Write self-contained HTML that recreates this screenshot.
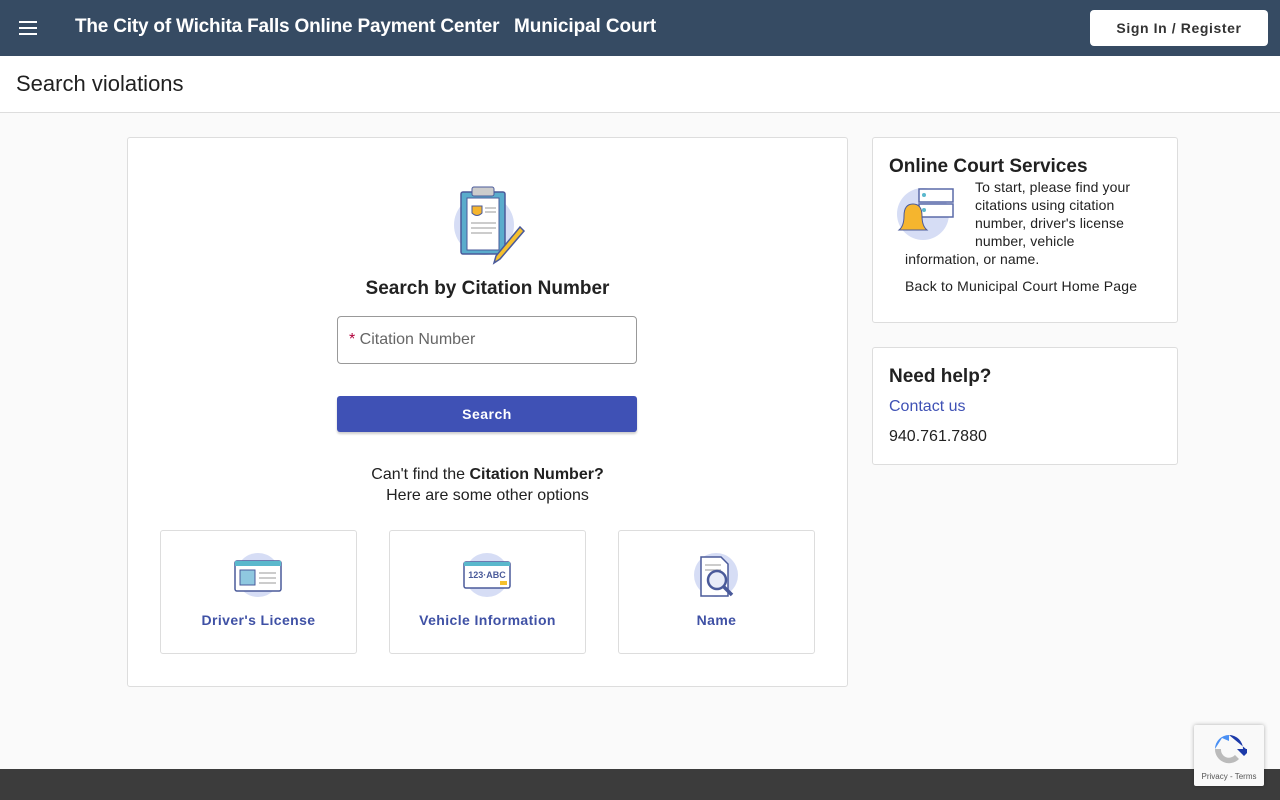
<!DOCTYPE html>
<html><head><style>
*{box-sizing:border-box;margin:0;padding:0}
body{width:1280px;height:800px;overflow:hidden;background:#fafafa;font-family:"Liberation Sans",sans-serif;color:#212121;position:relative}
.top{position:absolute;left:0;top:0;width:1280px;height:56px;background:#364b63;box-shadow:0 2px 4px rgba(0,0,0,.3)}
.top .t{position:absolute;left:75px;top:16px;color:#fff;font-size:19px;font-weight:bold;letter-spacing:-.2px}
.top .m{position:absolute;left:514px;top:16px;color:#fff;font-size:19px;font-weight:bold;letter-spacing:-.1px}
.sign{position:absolute;left:1090px;top:10px;width:178px;height:36px;background:#fff;border-radius:4px;font-size:14px;font-weight:bold;letter-spacing:.6px;text-align:center;line-height:36px;color:#333}
.sub{position:absolute;top:56px;left:0;width:1280px;height:57px;background:#fff;border-bottom:1px solid #ddd}
.sub div{position:absolute;left:16px;top:15px;font-size:22px}
.card{position:absolute;background:#fff;border:1px solid #ddd;border-radius:3px}
.opt{position:absolute;top:530px;width:197px;height:124px;border:1px solid #ddd;border-radius:3px;background:#fff}
.opt div{position:absolute;top:81px;width:100%;text-align:center;color:#3f51a5;font-weight:bold;font-size:14px;letter-spacing:.4px}
.opt svg{position:absolute;left:72px;top:22px}
.foot{position:absolute;left:0;top:769px;width:1280px;height:31px;background:#3c3c3c}
</style></head><body>
<div class="top">
<svg style="position:absolute;left:18px;top:18px" width="20" height="20"><rect x="1" y="3" width="18" height="2" fill="#fff"/><rect x="1" y="9" width="18" height="2" fill="#fff"/><rect x="1" y="15" width="18" height="2" fill="#fff"/></svg>
<div class="t">The City of Wichita Falls Online Payment Center</div>
<div class="m">Municipal Court</div>
<div class="sign">Sign In / Register</div>
</div>
<div class="sub"><div>Search violations</div></div>

<div class="card" style="left:127px;top:137px;width:721px;height:550px">
<svg style="position:absolute;left:320px;top:43px" width="80" height="85">
<circle cx="36" cy="44" r="30" fill="#d6ddf5"/>
<rect x="13" y="11" width="44" height="62" rx="2" fill="#5aaccc" stroke="#4a5a9a" stroke-width="1.5"/>
<rect x="19" y="17" width="32" height="52" fill="#fff" stroke="#4a5a9a"/>
<rect x="24" y="6" width="22" height="9" rx="2" fill="#ccc" stroke="#4a5a9a"/>
<path d="M24 25 h10 v7 q-5 5 -10 0 z" fill="#f5b52e" stroke="#4a5a9a"/>
<g stroke="#bbb" stroke-width="1.5"><line x1="37" y1="27" x2="48" y2="27"/><line x1="37" y1="31" x2="48" y2="31"/><line x1="23" y1="42" x2="48" y2="42"/><line x1="23" y1="47" x2="48" y2="47"/><line x1="23" y1="52" x2="44" y2="52"/></g>
<path d="M72 46 L76 50 L52 78 L46 82 L48 75 Z" fill="#f5c02e" stroke="#4a5a9a" stroke-width="1.5"/>
</svg>
<div style="position:absolute;top:140px;width:100%;text-align:center;font-size:19px;font-weight:bold;color:#222">Search by Citation Number</div>
<div style="position:absolute;left:209px;top:178px;width:300px;height:48px;border:1px solid #999;border-radius:4px;font-size:16px;color:#666;padding:14px 11px"><span style="color:#b0003a">*</span> Citation Number</div>
<div style="position:absolute;left:209px;top:258px;width:300px;height:36px;background:#3f51b5;border-radius:3px;color:#fff;font-weight:bold;font-size:14px;text-align:center;line-height:36px;letter-spacing:.5px;box-shadow:0 2px 2px rgba(0,0,0,.2)">Search</div>
<div style="position:absolute;top:326px;width:100%;text-align:center;font-size:16px;line-height:21px">Can't find the <b>Citation Number?</b><br>Here are some other options</div>
</div>
<div class="opt" style="left:160px"><svg width="50" height="45"><circle cx="25" cy="22" r="22" fill="#d6ddf5"/><rect x="2" y="8" width="46" height="30" rx="2" fill="#fff" stroke="#4a5a9a" stroke-width="1.5"/><rect x="2" y="8" width="46" height="5" fill="#5ab8cc"/><rect x="7" y="17" width="15" height="15" fill="#8fc8e0" stroke="#4a5a9a"/><g stroke="#bbb" stroke-width="1.5"><line x1="26" y1="20" x2="43" y2="20"/><line x1="26" y1="25" x2="43" y2="25"/><line x1="26" y1="30" x2="43" y2="30"/></g></svg><div>Driver's License</div></div>
<div class="opt" style="left:389px"><svg width="50" height="45"><circle cx="25" cy="22" r="22" fill="#d6ddf5"/><rect x="2" y="9" width="46" height="26" rx="2" fill="#fff" stroke="#4a5a9a" stroke-width="1.5"/><rect x="2" y="9" width="46" height="4" fill="#5ab8cc"/><text x="25" y="25" font-size="9" font-weight="bold" text-anchor="middle" fill="#4a5a9a" font-family="Liberation Sans">123·ABC</text><rect x="38" y="28" width="7" height="4" fill="#f5c02e"/></svg><div>Vehicle Information</div></div>
<div class="opt" style="left:618px"><svg width="50" height="48"><circle cx="25" cy="22" r="22" fill="#d6ddf5"/><path d="M10 4 h20 l7 7 v32 h-27 z" fill="#fff" stroke="#4a5a9a" stroke-width="1.5"/><g stroke="#bbb" stroke-width="1.5"><line x1="14" y1="12" x2="30" y2="12"/><line x1="14" y1="17" x2="30" y2="17"/></g><circle cx="26" cy="27" r="9" fill="#e8ecf8" stroke="#4a5a9a" stroke-width="2.5"/><line x1="33" y1="34" x2="41" y2="42" stroke="#4a5a9a" stroke-width="3.5"/></svg><div>Name</div></div>

<div class="card" style="left:872px;top:137px;width:306px;height:186px">
<div style="position:absolute;left:16px;top:18px;font-size:19px;font-weight:bold">Online Court Services</div>
<svg style="position:absolute;left:22px;top:46px" width="62" height="60"><circle cx="28" cy="30" r="26" fill="#d6ddf5"/><rect x="24" y="5" width="34" height="13" fill="#fff" stroke="#5a6aa8" stroke-width="1.5"/><rect x="24" y="20" width="34" height="13" fill="#fff" stroke="#5a6aa8" stroke-width="1.5"/><circle cx="29" cy="11" r="2" fill="#5ab8cc"/><circle cx="29" cy="26" r="2" fill="#5ab8cc"/><path d="M4 46 q5 -4 5 -14 q0 -12 9 -12 q9 0 9 12 q0 10 5 14 z" fill="#f5b52e" stroke="#4a5a9a"/></svg>
<div style="position:absolute;left:32px;top:40px;width:260px;font-size:14px;line-height:18px;letter-spacing:.1px;text-indent:70px">To start, please find your<br><span style="padding-left:70px">citations using citation</span><br><span style="padding-left:70px">number, driver's license</span><br><span style="padding-left:70px">number, vehicle</span><br>information, or name.</div>
<div style="position:absolute;left:32px;top:140px;font-size:14px;letter-spacing:.2px">Back to Municipal Court Home Page</div>
</div>
<div class="card" style="left:872px;top:347px;width:306px;height:118px">
<div style="position:absolute;left:16px;top:18px;font-size:19px;font-weight:bold">Need help?</div>
<div style="position:absolute;left:16px;top:50px;font-size:16px;color:#3f51b5">Contact us</div>
<div style="position:absolute;left:16px;top:80px;font-size:16px">940.761.7880</div>
</div>
<div class="foot"></div>
<div style="position:absolute;left:1194px;top:725px;width:70px;height:61px;background:#f9f9f9;box-shadow:0 0 4px rgba(0,0,0,.3);border-radius:2px">
<svg style="position:absolute;left:17px;top:6px" width="36" height="36"><path d="M18 4 a14 14 0 0 1 14 14 h-6 l7 7 l7-7 h-5" fill="#1c3aa9"/><path d="M4 18 a14 14 0 0 1 14 -14 v6 l-7-3" fill="#4a90f4"/><path d="M4 18 a14 14 0 0 0 24 10 l-4-4 a8 8 0 0 1 -14 -6 z" fill="#bbb"/></svg>
<div style="position:absolute;top:47px;width:100%;text-align:center;font-size:8px;color:#555">Privacy - Terms</div>
</div>
</body></html>
